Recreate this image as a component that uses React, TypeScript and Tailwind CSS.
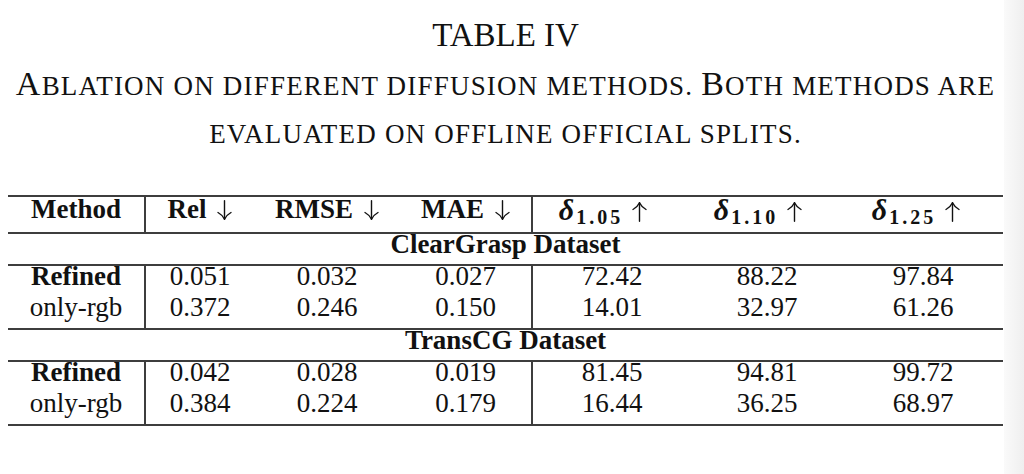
import React from "react";

const cols = "grid grid-cols-[138px_108px_146px_133px_158px_152px_160px]";

type Row = { method: string; bold?: boolean; vals: string[] };

const groups: { name: string; rows: Row[] }[] = [
  {
    name: "ClearGrasp Dataset",
    rows: [
      { method: "Refined", bold: true, vals: ["0.051", "0.032", "0.027", "72.42", "88.22", "97.84"] },
      { method: "only-rgb", vals: ["0.372", "0.246", "0.150", "14.01", "32.97", "61.26"] },
    ],
  },
  {
    name: "TransCG Dataset",
    rows: [
      { method: "Refined", bold: true, vals: ["0.042", "0.028", "0.019", "81.45", "94.81", "99.72"] },
      { method: "only-rgb", vals: ["0.384", "0.224", "0.179", "16.44", "36.25", "68.97"] },
    ],
  },
];

function Arrow({ up }: { up?: boolean }) {
  return (
    <svg
      width="15"
      height="20"
      viewBox="0 0 15 20"
      className={`inline-block align-[-2px] ${up ? "rotate-180" : ""}`}
      fill="none"
      stroke="currentColor"
      strokeWidth="1.4"
      strokeLinecap="round"
    >
      <path d="M7.5 0.8v18.4" />
      <path d="M1 12.5q4.5 2.5 6.5 6.7q2-4.2 6.5-6.7" />
    </svg>
  );
}

function Head({ label }: { label: string }) {
  return (
    <span>
      {label}
      <span className="ml-[11px]">
        <Arrow />
      </span>
    </span>
  );
}

function Delta({ sub }: { sub: string }) {
  return (
    <span className="inline-flex items-baseline">
      <span className="italic font-bold text-[30px]">δ</span>
      <span className="font-bold text-[20px] tracking-[3px] relative top-[4px] ml-[2px]">{sub}</span>
      <span className="ml-[9px]">
        <Arrow up />
      </span>
    </span>
  );
}

function SmallCaps({ text }: { text: string }) {
  // first letter of each capitalised word is big, rest small
  return (
    <>
      {text.split(/(\s+)/).map((w, i) =>
        /^[A-Z]/.test(w) ? (
          <span key={i}>
            <span className="text-[34px]">{w[0]}</span>
            {w.slice(1).toUpperCase()}
          </span>
        ) : (
          <span key={i}>{w.toUpperCase()}</span>
        )
      )}
    </>
  );
}

export default function App() {
  return (
    <div className="flex h-[474px] w-[1024px] bg-white text-[#111] font-['Liberation_Serif',serif]">
      <div className="w-[1004px] pl-[8px]">
        <div className="w-[995px]">
          <div className="pt-[20px] h-[51px] text-center text-[33px] leading-[31px]">TABLE IV</div>

          <div className="mt-[8px] text-center text-[27px] tracking-[1.2px] leading-[50px]">
            <div className="h-[50px]">
              <SmallCaps text="Ablation on different diffusion methods. Both methods are" />
            </div>
            <div className="h-[50px] uppercase">evaluated on offline official splits.</div>
          </div>

          {/* table */}
          <div className="mt-[36px] text-[27px] border-t-2 border-b-2 border-[#3d3d3d]">
            <div className={`${cols} font-bold text-center leading-[25px]`}>
              <div className="pb-[6px] border-r-2 border-[#3d3d3d]">Method</div>
              <div className="pb-[6px]"><Head label="Rel" /></div>
              <div className="pb-[6px]"><Head label="RMSE" /></div>
              <div className="pb-[6px] border-r-2 border-[#3d3d3d]"><Head label="MAE" /></div>
              <div className="pb-[6px] pr-[18px]"><Delta sub="1.05" /></div>
              <div className="pb-[6px] pr-[18px]"><Delta sub="1.10" /></div>
              <div className="pb-[6px] pr-[14px]"><Delta sub="1.25" /></div>
            </div>

            {groups.map((g) => (
              <div key={g.name}>
                <div className="border-t-2 border-[#3d3d3d] text-center font-bold leading-[20px] pb-[10px]">
                  {g.name}
                </div>
                <div className="border-t-2 border-[#3d3d3d]">
                  {g.rows.map((r) => (
                    <div key={r.method} className={`${cols} text-center leading-[21px]`}>
                      <div className={`pb-[10px] border-r-2 border-[#3d3d3d] ${r.bold ? "font-bold" : ""}`}>
                        {r.method}
                      </div>
                      {r.vals.map((v, i) => (
                        <div
                          key={i}
                          className={`pb-[10px] ${i === 2 ? "border-r-2 border-[#3d3d3d]" : ""}`}
                        >
                          {v}
                        </div>
                      ))}
                    </div>
                  ))}
                </div>
              </div>
            ))}
          </div>
        </div>
      </div>
      <div className="w-[20px] bg-gradient-to-r from-[#fafafa] to-[#efefef]" />
    </div>
  );
}
